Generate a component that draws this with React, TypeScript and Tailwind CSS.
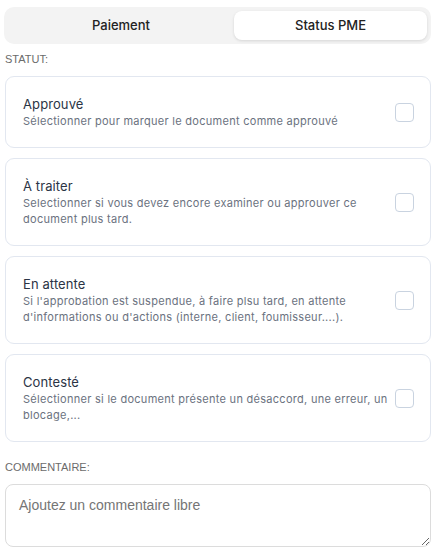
import React from "react";

const items = [
  { title: "Approuvé", desc: "Sélectionner pour marquer le document comme approuvé" },
  { title: "À traiter", desc: "Selectionner si vous devez encore examiner ou approuver ce document plus tard." },
  { title: "En attente", desc: "Si l'approbation est suspendue, à faire plsu tard, en attente d'informations ou d'actions (interne, client, foumisseur....)." },
  { title: "Contesté", desc: "Sélectionner si le document présente un désaccord, une erreur, un blocage,..." },
];

export default function App() {
  return (
    <div className="w-[436px] h-[558px] bg-white px-[5px] pt-[7px] overflow-hidden" style={{ fontFamily: "Inter, 'Liberation Sans', sans-serif" }}>
      <div className="flex bg-[#f3f3f3] rounded-[10px] p-[4px] ml-[-1px] w-[427px]">
        <div className="flex-1 h-[29px] flex items-center justify-center text-[13px] font-medium text-[#222]">Paiement</div>
        <div className="w-[193px] h-[29px] flex items-center justify-center text-[13px] font-medium text-[#222] bg-white rounded-[8px] shadow-[0_1px_3px_rgba(0,0,0,0.12)]">Status PME</div>
      </div>
      <div className="mt-[9px] text-[11px] text-[#6b6b6b] leading-[13px]" style={{ fontFamily: "'Liberation Sans', Arial, sans-serif" }}>STATUT:</div>
      <div className="mt-[10px] flex flex-col gap-[10px]">
        {items.map((it) => (
          <div key={it.title} className="flex items-center border-[1.5px] border-[#e2e7f0] rounded-[9px] pl-[17px] pr-[16px] py-[18px]">
            <div className="flex-1 pr-[6px]">
              <div className="text-[13px] leading-[18px] text-[#2b3445] font-normal tracking-[0.1px]">{it.title}</div>
              <div className="text-[11px] leading-[16px] text-[#6b7280] tracking-[0.28px]">{it.desc}</div>
            </div>
            <div className="w-[19px] h-[19px] border-[1.5px] border-[#c9d3e0] rounded-[4px] shrink-0"></div>
          </div>
        ))}
      </div>
      <div className="mt-[19px] text-[11px] text-[#6b6b6b] leading-[13px]" style={{ fontFamily: "'Liberation Sans', Arial, sans-serif" }}>COMMENTAIRE:</div>
      <textarea
        className="mt-[10px] block w-[426px] h-[63px] border border-[#dcdcdc] rounded-[8px] px-[13px] pt-[10px] pb-[8px] text-[14px] placeholder:text-[#757575] outline-none"
        style={{ fontFamily: "'Liberation Sans', Arial, sans-serif" }}
        placeholder="Ajoutez un commentaire libre"
      />
    </div>
  );
}
